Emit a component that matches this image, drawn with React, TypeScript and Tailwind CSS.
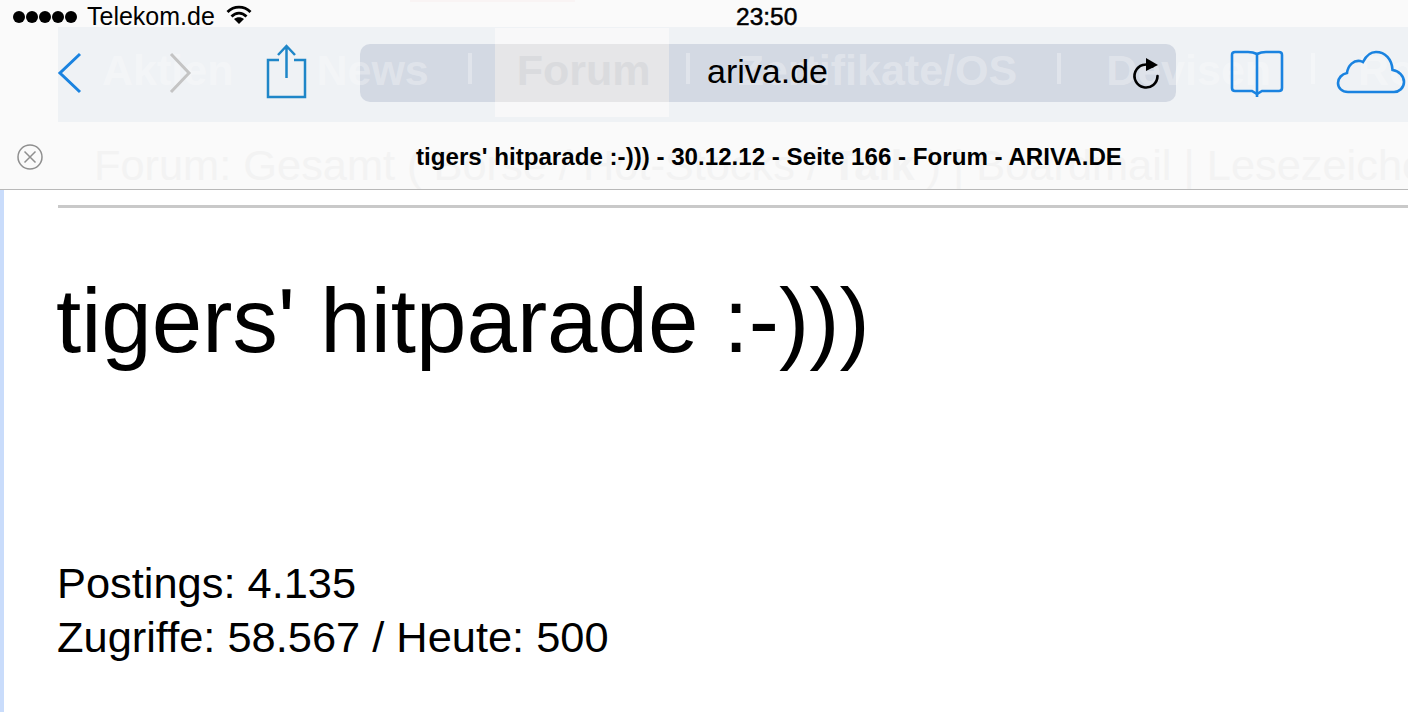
export default function App() {
  const sans = "font-['Liberation_Sans',Arial,sans-serif]";
  const sep = "w-[4px] h-[31px] mt-[12px] bg-current shrink-0";
  return (
    <div className={`w-[1408px] h-[712px] overflow-hidden bg-white ${sans} text-black`}>
      <header className="relative h-[190px] bg-[#fafafa] border-b border-[#b9b9b9]">
        {/* page content seen through the translucent bar */}
        <div className="absolute inset-0 overflow-hidden">
          <div className="ml-[410px] w-[165px] h-[2px] bg-[#f9f4f4]" />
          <div className="relative mt-[25px] ml-[58px] h-[95px] bg-[#eff2f5]">
            <div className="absolute left-[302px] top-[17px] w-[816px] h-[58px] rounded-[10px] bg-[#d3d9e3]" />
            <div className="absolute left-[437px] top-[1px] w-[174px] h-[89px] bg-[#f8f8f9] pt-[16px]">
              <div className="h-[58px] bg-[#e6e6e8]" />
            </div>
            <div className="relative flex items-start pl-[44px] pt-[14px] text-[43px] leading-[58px] font-bold text-white/30 whitespace-nowrap">
              <span>Aktien</span>
              <span className="ml-[83px]">News</span>
              <span className={`ml-[39px] ${sep}`} />
              <span className="ml-[45px] text-[#dadbde]">Forum</span>
              <span className={`ml-[35px] ${sep}`} />
              <span className="ml-[48px]">Zertifikate/OS</span>
              <span className={`ml-[40px] ${sep}`} />
              <span className="ml-[45px]">Devisen</span>
              <span className={`ml-[40px] ${sep}`} />
              <span className="ml-[43px]">Rohstoffe</span>
            </div>
          </div>
          <div className="mt-[20px] ml-[94px] text-[43.350px] leading-[46px] text-[#f3f3f3] whitespace-nowrap">
            Forum: Gesamt ( Börse / Hot-Stocks / <b>Talk</b> ) | Boardmail | Lesezeichen
          </div>
        </div>
        {/* bar foreground */}
        <div className="relative h-full flex flex-col">
          <div className="relative h-[33px] flex items-center pl-[13px]">
            <div className="flex gap-[1px]">
              {[0, 1, 2, 3, 4].map((i) => (
                <span key={i} className="w-[12px] h-[12px] rounded-full bg-black" />
              ))}
            </div>
            <span className="ml-[10px] text-[25px] leading-[33px]">Telekom.de</span>
            <svg className="ml-[11px] -mt-[3px]" width="26" height="20" viewBox="0 0 26 20" fill="none" stroke="#000" strokeWidth="2.8">
              <path d="M1.500 7C8 0.500 18 0.500 24.500 7" />
              <path d="M5.500 11.500C10 7 16 7 20.500 11.500" />
              <path d="M13 19L8 14C11 11.500 15 11.500 18 14Z" fill="#000" stroke="none" />
            </svg>
            <span className="absolute left-[736px] top-0 text-[24.500px] leading-[33px] [-webkit-text-stroke:0.5px_black]">23:50</span>
          </div>
          <div className="relative h-[69px] flex items-center">
            <span className="absolute left-[707px] top-[9px] text-[34px] leading-[58px]">ariva.de</span>
            <svg className="absolute left-[1130px] top-[23px]" width="32" height="34" viewBox="0 0 32 34" fill="none">
              <path d="M22.500 10.500A11.500 11.500 0 1 0 27.500 20" stroke="#000" strokeWidth="2.600" strokeLinecap="round" />
              <path d="M16 2L28 9L16 15Z" fill="#000" />
            </svg>
            <svg className="ml-[56px] mt-[11px]" width="28" height="44" viewBox="0 0 28 44" fill="none" stroke="#1a83e0" strokeWidth="3">
              <path d="M24 3L4 22L24 41" />
            </svg>
            <svg className="ml-[84px] mt-[11px]" width="24" height="44" viewBox="0 0 24 44" fill="none" stroke="#c4c4c4" strokeWidth="3">
              <path d="M3 3L21 22L3 41" />
            </svg>
            <svg className="ml-[74px] mt-[8px]" width="42" height="56" viewBox="0 0 42 56" fill="none" stroke="#1e86c8" strokeWidth="2.500">
              <path d="M13 16H2V53H39V16H28" />
              <path d="M20.500 34V2M12 11L20.500 2L29 11" />
            </svg>
            <svg className="absolute left-[1230px] top-[17px]" width="54" height="48" viewBox="0 0 54 48" fill="none" stroke="#1a83e0" strokeWidth="2.600">
              <path d="M27 4C24 2.500 21 2 18 2H5Q2 2 2 5V38Q2 41 5 41H22L27 44L32 41H49Q52 41 52 38V5Q52 2 49 2H36C33 2 30 2.500 27 4Z" />
              <path d="M27 4V47" />
            </svg>
            <svg className="absolute left-[1336px] top-[17px]" width="70" height="46" viewBox="0 0 70 46" fill="none" stroke="#1a83e0" strokeWidth="2.600">
              <path d="M12 42C6 42 2 38 2 33C2 28 6 24 11 23C12 15 18 10 24 11Q25.500 11.300 27 12C30 6 34 2 40 2C49 2 56 9 56.500 20C63 21 68 26 68 32C68 38 63 42 58 42Z" />
            </svg>
          </div>
          <div className="relative flex-1 flex items-center">
            <svg className="absolute left-[16px] top-[41px]" width="28" height="28" viewBox="0 0 28 28" fill="none" stroke="#8f8f8f" strokeWidth="1.500">
              <circle cx="14" cy="14" r="12" />
              <path d="M8.500 8.500L19.500 19.500M19.500 8.500L8.500 19.500" />
            </svg>
            <span className="ml-[416px] mt-[23px] text-[24.150px] leading-[30px] font-bold whitespace-nowrap">tigers' hitparade :-))) - 30.12.12 - Seite 166 - Forum - ARIVA.DE</span>
          </div>
        </div>
      </header>
      <main className="h-[522px] border-l-[4px] border-[#c9dcfb] pl-[54px] pt-[15px]">
        <div className="h-[3px] bg-[#c9c9c9]" />
        <h1 className="mt-[63px] -ml-[2px] text-[90.700px] leading-[100px] font-normal whitespace-nowrap">tigers' hitparade :-)))</h1>
        <div className="mt-[185px] -ml-[1px] text-[43.400px] leading-[54px] whitespace-nowrap">
          <div>Postings: 4.135</div>
          <div>Zugriffe: 58.567 / Heute: 500</div>
        </div>
      </main>
    </div>
  );
}
